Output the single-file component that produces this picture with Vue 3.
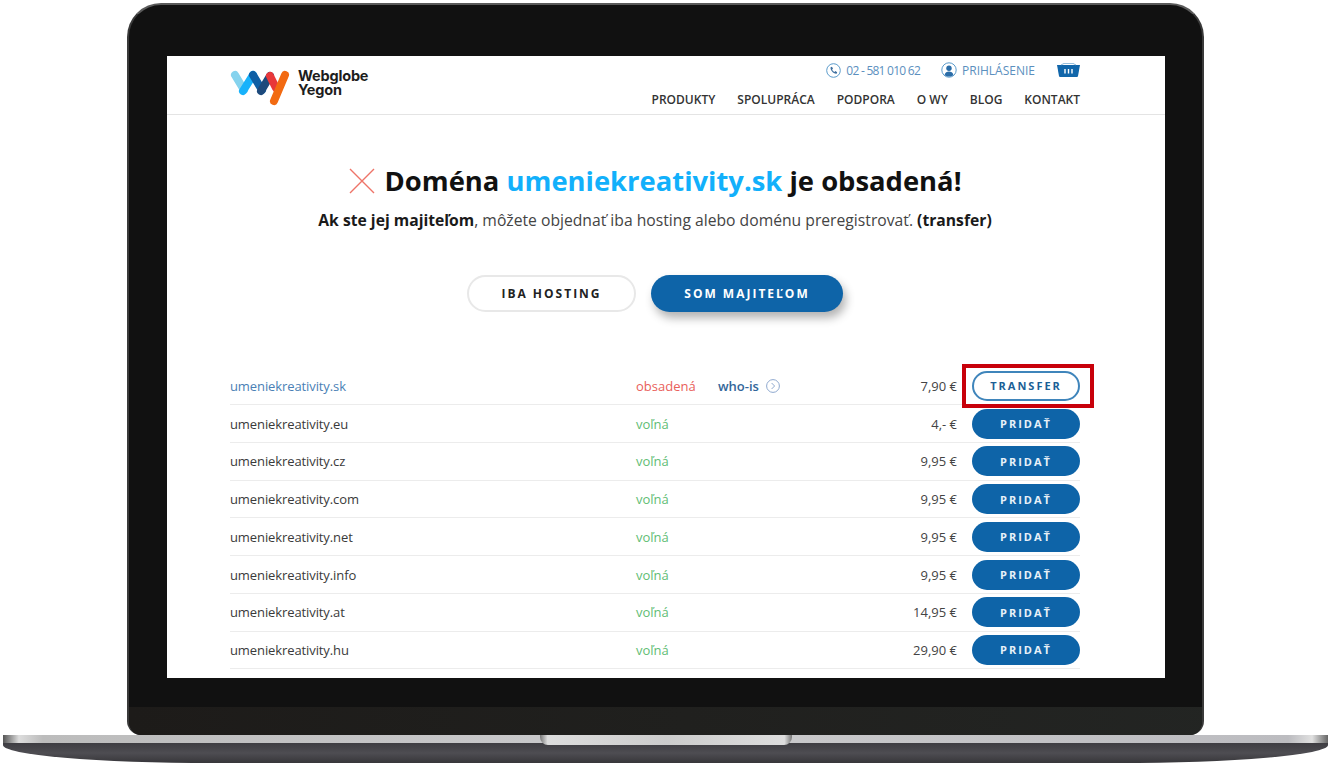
<script setup>
const nav = ['Produkty', 'Spolupráca', 'Podpora', 'O WY', 'Blog', 'Kontakt']
const rows = [
  { name: 'umeniekreativity.sk', price: '7,90 €', taken: true },
  { name: 'umeniekreativity.eu', price: '4,- €' },
  { name: 'umeniekreativity.cz', price: '9,95 €' },
  { name: 'umeniekreativity.com', price: '9,95 €' },
  { name: 'umeniekreativity.net', price: '9,95 €' },
  { name: 'umeniekreativity.info', price: '9,95 €' },
  { name: 'umeniekreativity.at', price: '14,95 €' },
  { name: 'umeniekreativity.hu', price: '29,90 €' }
]
</script>

<template>
  <div class="laptop">
    <div class="bezel">
      <div class="screen">
        <header class="header">
          <div class="logo">
            <svg class="logo-mark" width="60" height="38" viewBox="0 0 60 38">
              <g fill="none" stroke-width="8" stroke-linecap="round">
                <path d="M5 6 L14 21" stroke="#85d3ee" />
                <path d="M13 22 L23 6" stroke="#18b2fb" />
                <path d="M23 6 L32 21" stroke="#0e5fa5" />
                <path d="M31 22 L40 7" stroke="#1d4a7c" />
                <path d="M40 7 L46 19" stroke="#e8383a" />
                <path d="M55 6 L44 32" stroke="#f26a12" />
              </g>
            </svg>
            <div class="logo-text">Webglobe<br />Yegon</div>
          </div>
          <div class="header-right">
            <div class="top-links">
              <span class="top-link">
                <svg width="15" height="15" viewBox="0 0 15 15">
                  <circle cx="7.5" cy="7.5" r="6.8" fill="none" stroke="#5b9bcb" stroke-width="1" />
                  <path d="M4.6 4.3 L6 3.8 L7 5.8 L6.1 6.6 C6.5 7.6 7.4 8.6 8.5 9 L9.3 8.1 L11.2 9.2 L10.6 10.7 C8 11.3 3.9 7.4 4.6 4.3 Z" fill="#3f6f9f" />
                </svg>
                <span class="phone">02 - 581 010 62</span>
              </span>
              <span class="top-link login">
                <svg width="16" height="16" viewBox="0 0 16 16">
                  <circle cx="8" cy="8" r="7.2" fill="none" stroke="#5b9bcb" stroke-width="1" />
                  <circle cx="8" cy="6.2" r="2.7" fill="#2a6da8" />
                  <path d="M3.6 13 C4.2 10.2 6 9.6 8 9.6 C10 9.6 11.8 10.2 12.4 13 C10 15 6 15 3.6 13 Z" fill="#2a6da8" />
                </svg>
                <span>PRIHLÁSENIE</span>
              </span>
              <svg class="basket" width="23" height="14" viewBox="0 0 23 14">
                <path d="M0 2 H23 L21 13 Q20.8 14 20 14 H3 Q2.2 14 2 13 Z" fill="#1166aa" />
                <path d="M4 2 L7 0.4 H16 L19 2" fill="none" stroke="#6fa6d0" stroke-width="0.8" />
                <path d="M8 6 V10.5 M11.5 6 V10.5 M15 6 V10.5" stroke="#fff" stroke-width="1.4" />
              </svg>
            </div>
            <nav class="nav">
              <span v-for="item in nav" :key="item">{{ item }}</span>
            </nav>
          </div>
        </header>

        <main class="main">
          <h1 class="title">
            <svg class="cross" width="26" height="26" viewBox="0 0 26 26">
              <path d="M1 1 L25 25 M25 1 L1 25" stroke="#ee7468" stroke-width="1.4" fill="none" />
            </svg>
            <span>Doména <em>umeniekreativity.sk</em> je obsadená!</span>
          </h1>
          <p class="subtitle"><b>Ak ste jej majiteľom</b>, môžete objednať iba hosting alebo doménu preregistrovať. <b>(transfer)</b></p>
          <div class="actions">
            <button class="btn-hosting">IBA HOSTING</button>
            <button class="btn-owner">SOM MAJITEĽOM</button>
          </div>

          <div class="table">
            <div v-for="row in rows" :key="row.name" class="row">
              <span class="name" :class="{ 'name-taken': row.taken }">{{ row.name }}</span>
              <span class="status" :class="row.taken ? 'taken' : 'free'">{{ row.taken ? 'obsadená' : 'voľná' }}</span>
              <span class="whois">
                <template v-if="row.taken">
                  <b>who-is</b>
                  <svg width="14" height="14" viewBox="0 0 14 14">
                    <circle cx="7" cy="7" r="6.4" fill="none" stroke="#8fa9cf" stroke-width="1" />
                    <path d="M5.6 4 L8.6 7 L5.6 10" fill="none" stroke="#8fa9cf" stroke-width="1" />
                  </svg>
                </template>
              </span>
              <span class="price">{{ row.price }}</span>
              <span class="cell-btn">
                <template v-if="row.taken">
                  <button class="btn-transfer">TRANSFER</button>
                  <span class="highlight"></span>
                </template>
                <button v-else class="btn-add">PRIDAŤ</button>
              </span>
            </div>
          </div>
        </main>
      </div>
      <div class="chin"></div>
    </div>
    <div class="base">
      <div class="base-top"><div class="notch"></div></div>
      <div class="base-bottom"></div>
    </div>
  </div>
</template>

<style scoped>
.laptop {
  width: 1330px;
  height: 763px;
  padding-top: 3px;
  box-sizing: border-box;
  overflow: hidden;
  font-family: "Open Sans", "Liberation Sans", sans-serif;
  color: #333;
}
.bezel {
  width: 1077px;
  height: 732px;
  margin-left: 127px;
  box-sizing: border-box;
  padding-top: 53px;
  padding-left: 40px;
  background: #111;
  border: solid #3a3a3a;
  border-top-color: #5a5a5a;
  border-width: 2px 2px 0 2px;
  border-radius: 34px 34px 14px 14px;
  overflow: hidden;
  position: relative;
  display: flex;
  flex-direction: column;
}
.screen {
  width: 998px;
  height: 622px;
  margin-left: -2px;
  margin-top: -2px;
  background: #fff;
  overflow: hidden;
  flex: none;
}
.chin {
  flex: none;
  margin: 29px -40px 0;
  height: 28px;
  background: linear-gradient(90deg, #1d1b19, #232523);
}
.base {
  width: 1325px;
  margin-left: 3px;
}
.base-top {
  height: 8px;
  background: linear-gradient(90deg, #555 0, #ddd 1.2%, #bcbcbc 3%, #c8c8ca 40%, #c8c8ca 60%, #bcbcc0 97%, #e0e0e0 98.8%, #666 100%);
  position: relative;
}
.notch {
  position: absolute;
  left: 537px;
  top: 0;
  width: 252px;
  height: 10px;
  background: linear-gradient(90deg, #777 0, #ddd 3%, #ccc 50%, #ddd 97%, #777 100%);
  border-radius: 0 0 8px 8px;
}
.base-bottom {
  height: 20px;
  background: linear-gradient(#3e3d42, #4e4d52 50%, #37363a);
  border-radius: 0 0 210px 210px / 0 0 18px 18px;
}
.header {
  height: 59px;
  box-sizing: border-box;
  padding: 0 85px 0 63px;
  border-bottom: 1px solid #e4e4e4;
  display: flex;
  justify-content: space-between;
}
.logo {
  display: flex;
  align-items: flex-start;
  padding-top: 13px;
}
.logo-mark {
  flex: none;
  margin-right: 9px;
}
.logo-text {
  margin-left: -1px;
  font-family: Inter, "Liberation Sans", sans-serif;
  font-weight: 700;
  font-size: 14.5px;
  line-height: 14px;
  letter-spacing: -0.2px;
  color: #1d1d1d;
}
.header-right {
  display: flex;
  flex-direction: column;
  align-items: flex-end;
}
.top-links {
  display: flex;
  align-items: center;
  height: 28px;
  font-size: 12px;
  color: #5b8fbe;
}
.top-link {
  display: flex;
  align-items: center;
  gap: 5px;
}
.phone {
  letter-spacing: -0.75px;
}
.login {
  margin-left: 21px;
}
.basket {
  margin-left: 22px;
}
.nav {
  display: flex;
  gap: 22px;
  margin-top: 8px;
  font-size: 12px;
  font-weight: 600;
  line-height: 16px;
  text-transform: uppercase;
  color: #333;
}
.main {
  padding: 0 85px 0 63px;
}
.title {
  margin: 47px 0 0;
  display: flex;
  justify-content: center;
  align-items: center;
  gap: 10px;
  font-size: 27.4px;
  font-weight: 700;
  line-height: 38px;
  color: #111;
}
.title em {
  font-style: normal;
  color: #12b0fb;
}
.cross {
  flex: none;
}
.subtitle {
  margin: 9px 0 0;
  text-align: center;
  font-size: 15.7px;
  line-height: 22px;
  color: #444;
}
.subtitle b {
  color: #1a1a1a;
  font-weight: 700;
}
.actions {
  display: flex;
  justify-content: center;
  gap: 15px;
  margin-top: 44px;
}
button {
  font-family: inherit;
  cursor: pointer;
  box-sizing: border-box;
  border-radius: 100px;
  font-weight: 700;
}
.btn-hosting,
.btn-owner {
  height: 37px;
  font-size: 12px;
  letter-spacing: 2px;
}
.btn-hosting {
  width: 169px;
  background: #fff;
  border: 2px solid #e8e8e8;
  color: #222;
}
.btn-owner {
  width: 192px;
  background: #0e64a8;
  border: 0;
  color: #fff;
  box-shadow: 3px 6px 10px rgba(0, 0, 0, 0.3);
}
.table {
  margin-top: 55.6px;
}
.row {
  height: 37.72px;
  box-sizing: border-box;
  border-bottom: 1px solid #ececec;
  display: grid;
  grid-template-columns: 406px 82px 62px 1fr 108px;
  align-items: center;
  font-size: 13px;
}
.name {
  color: #3a3a3a;
  letter-spacing: -0.1px;
}
.name-taken {
  color: #4a7fb5;
}
.taken {
  color: #e9605a;
}
.free {
  color: #5fbd75;
}
.whois {
  display: flex;
  align-items: center;
  justify-content: space-between;
}
.whois b {
  font-weight: 600;
  color: #336699;
}
.price {
  text-align: right;
  padding-right: 15px;
  color: #444;
}
.cell-btn {
  position: relative;
  display: flex;
}
.btn-transfer,
.btn-add {
  width: 108px;
  height: 30px;
  font-size: 11px;
  letter-spacing: 2px;
  padding: 0;
}
.btn-transfer {
  background: #fff;
  border: 2px solid #3f85bb;
  color: #1c5f96;
}
.btn-add {
  background: #0e64a8;
  border: 0;
  color: #e8f1f8;
}
.highlight {
  position: absolute;
  left: -10px;
  top: -7px;
  width: 132px;
  height: 44px;
  box-sizing: border-box;
  border: 4px solid #c8000a;
  pointer-events: none;
}
</style>

<style>
html, body {
  background: #fff;
  overflow: hidden;
}
</style>
